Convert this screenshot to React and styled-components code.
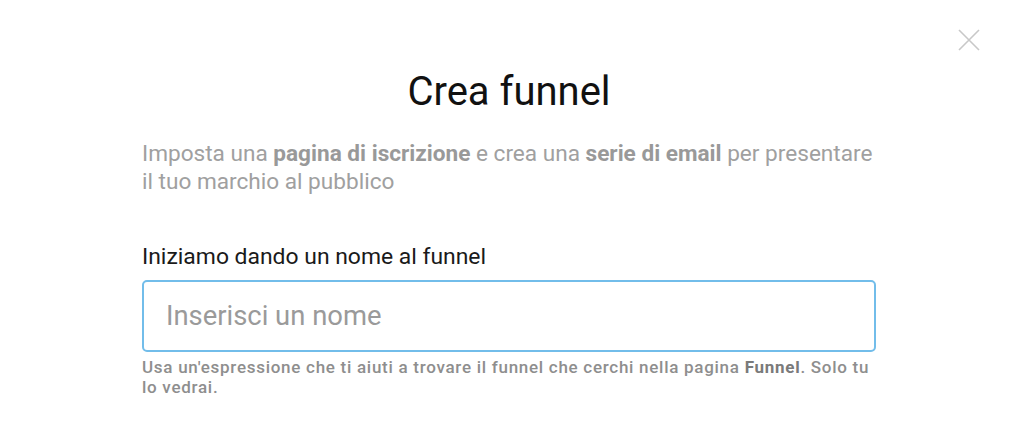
import React from "react";
import styled, { createGlobalStyle } from "styled-components";

const Global = createGlobalStyle`
  html, body { margin: 0; padding: 0; background: #fff; }
  body { font-family: Roboto, "Noto Sans", sans-serif; -webkit-font-smoothing: antialiased; }
  * { box-sizing: border-box; }
`;

const Page = styled.div`
  position: relative;
  width: 1024px;
  height: 433px;
  background: #fff;
  overflow: hidden;
`;

const Close = styled.button`
  position: absolute;
  top: 28px;
  right: 43px;
  width: 24px;
  height: 24px;
  padding: 0;
  border: none;
  background: none;
  cursor: pointer;
  display: flex;
  align-items: center;
  justify-content: center;
`;

const Content = styled.div`
  width: 734px;
  padding-top: 70px;
  margin-left: 142px;
  display: flex;
  flex-direction: column;
`;

const Title = styled.h1`
  margin: 0;
  text-align: center;
  font-size: 40px;
  line-height: 44px;
  font-weight: 400;
  color: #111;
`;

const Description = styled.p`
  margin: 26px 0 0;
  font-size: 22.6px;
  line-height: 28px;
  color: #a0a0a0;
  font-weight: 400;
  b { font-weight: 700; color: #999; }
`;

const Label = styled.label`
  margin-top: 47px;
  font-size: 22.9px;
  line-height: 28px;
  color: #1a1a1a;
`;

const Input = styled.input`
  margin-top: 9px;
  height: 72px;
  width: 100%;
  border: 2px solid #72bdea;
  border-radius: 5px;
  padding: 0 22px;
  font-family: Roboto, sans-serif;
  font-size: 27.4px;
  color: #222;
  outline: none;
  &::placeholder { color: #9a9a9a; }
`;

const Help = styled.p`
  margin: 5px 0 0;
  font-size: 17px;
  line-height: 20px;
  font-weight: 500;
  letter-spacing: 0.72px;
  color: #8e8e8e;
  b { font-weight: 700; color: #7a7a7a; }
`;

export default function App() {
  return (
    <Page>
      <Global />
      <Close aria-label="Chiudi">
        <svg width="22" height="22" viewBox="0 0 22 22">
          <path d="M1 1 L21 21 M21 1 L1 21" stroke="#c8c8c8" strokeWidth="1.6" fill="none" />
        </svg>
      </Close>
      <Content>
        <Title>Crea funnel</Title>
        <Description>
          Imposta una <b>pagina di iscrizione</b> e crea una <b>serie di email</b> per presentare il tuo marchio al pubblico
        </Description>
        <Label htmlFor="name">Iniziamo dando un nome al funnel</Label>
        <Input id="name" placeholder="Inserisci un nome" />
        <Help>
          Usa un'espressione che ti aiuti a trovare il funnel che cerchi nella pagina <b>Funnel</b>. Solo tu lo vedrai.
        </Help>
      </Content>
    </Page>
  );
}
